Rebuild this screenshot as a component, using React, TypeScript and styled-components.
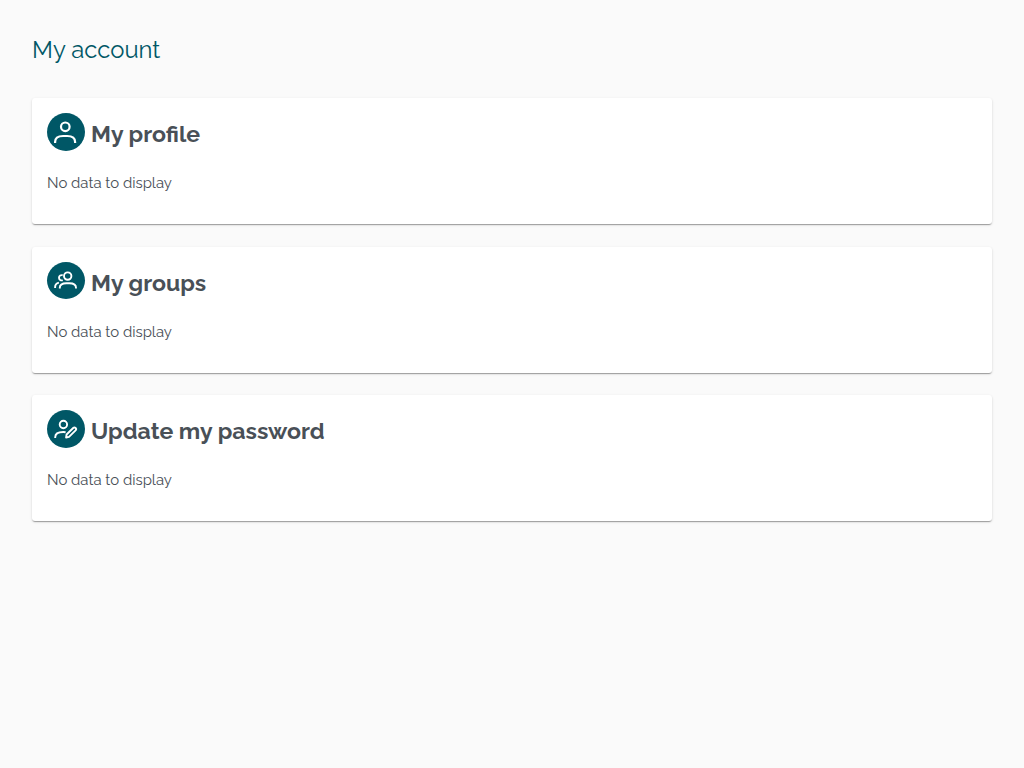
import React from "react";
import styled, { createGlobalStyle } from "styled-components";

const GlobalStyle = createGlobalStyle`
  * { box-sizing: border-box; }
  body {
    margin: 0;
    background: #fafafa;
    color: #495057;
    font-family: Raleway, Lato, "Open Sans", sans-serif;
  }
`;

const Page = styled.main`
  padding: 32px;
`;

const PageTitle = styled.h1`
  margin: 0 0 30px;
  font-size: 23.85px;
  font-weight: 400;
  line-height: 36px;
  color: #005766;
`;

const CardList = styled.div`
  display: flex;
  flex-direction: column;
  gap: 22.5px;
`;

const Card = styled.section`
  height: 126px;
  padding: 15px;
  background: #fff;
  border-radius: 3px;
  box-shadow:
    0 2px 1px -1px rgba(0, 0, 0, 0.2),
    0 1px 1px 0 rgba(0, 0, 0, 0.14),
    0 1px 3px 0 rgba(0, 0, 0, 0.12);
`;

const CardHeader = styled.header`
  display: flex;
  align-items: flex-start;
  gap: 6px;
  height: 38px;
`;

const Badge = styled.svg<{ $height?: number; $stroke?: number }>`
  flex: none;
  width: 38px;
  height: ${(p) => p.$height ?? 38}px;
  border-radius: 50%;
  background: #005766;
  fill: none;
  stroke: #fff;
  stroke-width: ${(p) => p.$stroke ?? 1.9};
  stroke-linejoin: round;
`;

const CardTitle = styled.h2`
  margin: 0;
  padding-top: 4px;
  font-size: 23.07px;
  font-weight: 700;
  line-height: 34px;
  white-space: nowrap;
`;

const Message = styled.p`
  margin: 20px 0 0;
  font-size: 14.93px;
  line-height: 24px;
`;

const ProfileIcon = () => (
  <Badge viewBox="0 0 38 38" $stroke={2.2}>
    <circle cx="18.3" cy="13.8" r="4.3" />
    <path d="M8.100 30v-1c0-4 2.800-6 8-6h4c5.200 0 8 2 8 6v1" />
  </Badge>
);

const GroupsIcon = () => (
  <Badge $height={37} viewBox="0 0 38 37">
    <circle cx="20.700" cy="14.100" r="3.700" />
    <path d="M12.800 26.500v-.7c0-2.900 2.400-4.600 6.600-4.600h3c4.200 0 6.600 1.700 6.600 4.600v.7" />
    <path d="M15.700 13.400a2.600 2.600 0 1 0 0 4.700M8.100 26v-.8c0-2.500 1.200-4 3.800-4.600" />
  </Badge>
);

const PasswordIcon = () => (
  <Badge viewBox="0 0 38 38">
    <circle cx="16.400" cy="14.500" r="3.700" />
    <path d="M8.200 28v-.8c0-3.200 2.800-5.200 8-5.200q1.300 0 2.400.2" />
    <path d="m19.100 27.500.5-3 6.600-6.500c1.600-1.500 4 .7 2.400 2.400l-6.600 6.500z" />
  </Badge>
);

const sections = [
  { title: "My profile", Icon: ProfileIcon },
  { title: "My groups", Icon: GroupsIcon },
  { title: "Update my password", Icon: PasswordIcon },
];

export default function App() {
  return (
    <>
      <GlobalStyle />
      <Page>
        <PageTitle>My account</PageTitle>
        <CardList>
          {sections.map(({ title, Icon }) => (
            <Card key={title}>
              <CardHeader>
                <Icon />
                <CardTitle>{title}</CardTitle>
              </CardHeader>
              <Message>No data to display</Message>
            </Card>
          ))}
        </CardList>
      </Page>
    </>
  );
}
